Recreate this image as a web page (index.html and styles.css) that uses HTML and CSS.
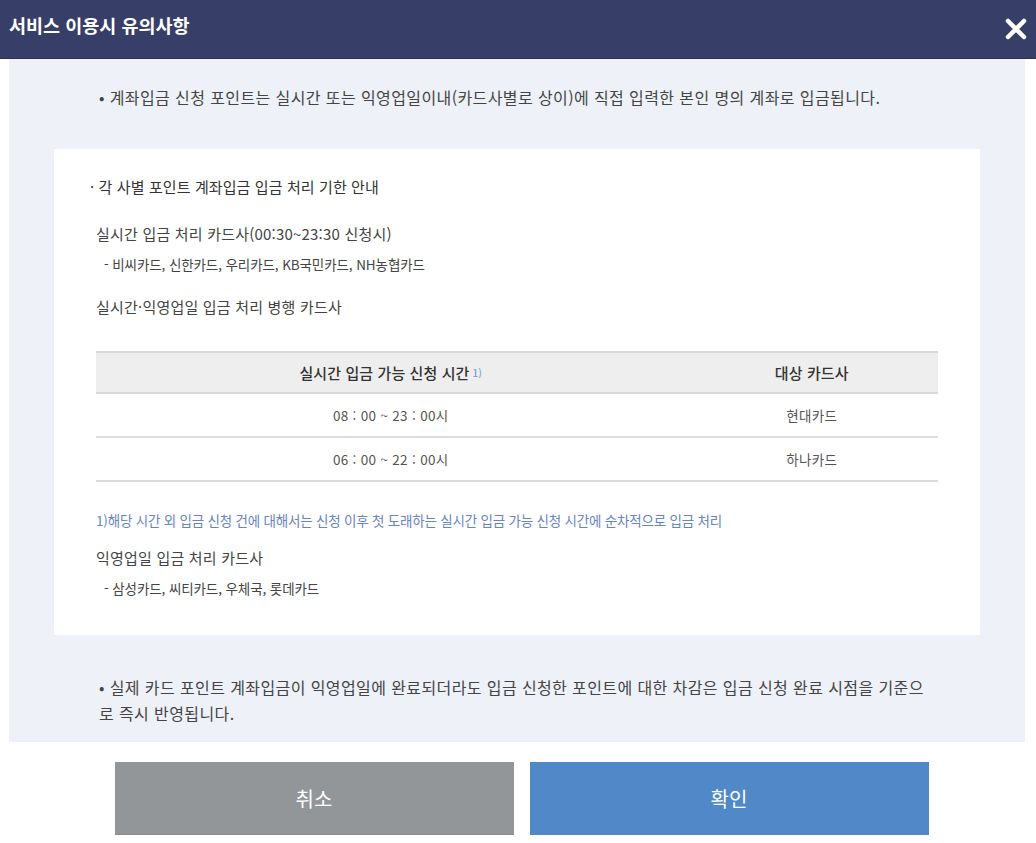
FILE: index.html
```html
<!DOCTYPE html>
<html lang="ko">
<head>
  <meta charset="UTF-8">
  <meta name="viewport" content="width=device-width, initial-scale=1.0">
  <title>서비스 이용시 유의사항</title>
  <link rel="stylesheet" href="styles.css">
</head>
<body>
  <div class="popup">
    <div class="popup-head">
      <h2>서비스 이용시 유의사항</h2>
      <button class="btn-close" aria-label="닫기">
        <svg width="22" height="22" viewBox="0 0 22 22">
          <path d="M3 3 L19 19 M19 3 L3 19" stroke="#fff" stroke-width="4.5" stroke-linecap="round"/>
        </svg>
      </button>
    </div>

    <div class="popup-body">
      <p class="notice">• 계좌입금 신청 포인트는 실시간 또는 익영업일이내(카드사별로 상이)에 직접 입력한 본인 명의 계좌로 입금됩니다.</p>

      <div class="info-box">
        <p class="info-title">· 각 사별 포인트 계좌입금 입금 처리 기한 안내</p>

        <p class="sub-title first">실시간 입금 처리 카드사(00:30~23:30 신청시)</p>
        <p class="card-list">- 비씨카드, 신한카드, 우리카드, KB국민카드, NH농협카드</p>

        <p class="sub-title">실시간·익영업일 입금 처리 병행 카드사</p>

        <table class="time-table">
          <thead>
            <tr>
              <th class="col-time">실시간 입금 가능 신청 시간<sup>1)</sup></th>
              <th>대상 카드사</th>
            </tr>
          </thead>
          <tbody>
            <tr>
              <td>08 : 00 ~ 23 : 00시</td>
              <td>현대카드</td>
            </tr>
            <tr>
              <td>06 : 00 ~ 22 : 00시</td>
              <td>하나카드</td>
            </tr>
          </tbody>
        </table>

        <p class="footnote">1)해당 시간 외 입금 신청 건에 대해서는 신청 이후 첫 도래하는 실시간 입금 가능 신청 시간에 순차적으로 입금 처리</p>

        <p class="sub-title after-note">익영업일 입금 처리 카드사</p>
        <p class="card-list">- 삼성카드, 씨티카드, 우체국, 롯데카드</p>
      </div>

      <p class="notice notice-bottom">• 실제 카드 포인트 계좌입금이 익영업일에 완료되더라도 입금 신청한 포인트에 대한 차감은 입금 신청 완료 시점을 기준으로 즉시 반영됩니다.</p>
    </div>

    <div class="popup-foot">
      <button class="btn btn-cancel">취소</button>
      <button class="btn btn-ok">확인</button>
    </div>
  </div>
</body>
</html>
```

FILE: styles.css
```css
* {
  margin: 0;
  padding: 0;
  box-sizing: border-box;
}

body {
  font-family: 'Noto Sans CJK KR', 'Noto Sans', sans-serif;
  background: #fff;
  color: #333;
  width: 1036px;
  height: 843px;
  overflow: hidden;
}

.popup-head {
  height: 59px;
  background: #373f68;
  border-bottom: 1px solid #2c3358;
  display: flex;
  align-items: center;
  justify-content: space-between;
  padding: 0 9px 8px 9px;
}

.popup-head h2 {
  color: #fff;
  font-size: 18.5px;
  font-weight: 700;
  letter-spacing: 0;
}

.btn-close {
  background: none;
  border: 0;
  cursor: pointer;
  display: flex;
  margin-top: 8px;
}

.popup-body {
  margin: 0 11px 0 9px;
  background: #eef1f8;
  padding: 25px 45px 16px 45px;
}

.notice {
  font-size: 16px;
  color: #444;
  letter-spacing: 0.4px;
  line-height: 26px;
  padding: 0 36px 0 45px;
}

.notice-bottom {
  margin-top: 39px;
  padding-right: 50px;
  word-break: break-all;
}

.info-box {
  background: #fff;
  margin-top: 39px;
  padding: 27px 42px 37px 42px;
}

.info-title {
  font-size: 15px;
  line-height: 22px;
  color: #333;
  letter-spacing: 0.1px;
  margin-left: -6px;
}

.sub-title {
  font-size: 15px;
  line-height: 22px;
  color: #444;
  letter-spacing: 0.2px;
  margin-top: 22px;
}

.sub-title.first {
  margin-top: 25px;
}

.sub-title.after-note {
  margin-top: 17px;
}

.card-list {
  font-size: 13.5px;
  line-height: 20px;
  color: #444;
  letter-spacing: -0.1px;
  margin-top: 9px;
  padding-left: 8px;
}

.time-table {
  width: 100%;
  border-collapse: collapse;
  margin-top: 33px;
  border-top: 2px solid #d8d8d8;
}

.time-table th {
  background: #eeeeee;
  height: 41px;
  font-size: 15px;
  font-weight: 500;
  color: #333;
  letter-spacing: 0.1px;
  border-bottom: 2px solid #d8d8d8;
}

.time-table th.col-time {
  width: 70%;
}

.time-table sup {
  font-size: 10px;
  color: #7f9fd6;
  margin-left: 3px;
  vertical-align: 2px;
}

.time-table td {
  height: 44px;
  text-align: center;
  font-size: 13.5px;
  color: #555;
  letter-spacing: 0.3px;
  border-bottom: 2px solid #dcdcdc;
}

.footnote {
  font-size: 13.5px;
  line-height: 20px;
  color: #6684c6;
  letter-spacing: -0.2px;
  margin-top: 28px;
}

.popup-foot {
  display: flex;
  justify-content: center;
  gap: 16px;
  margin-top: 20px;
  padding-left: 7px;
}

.btn {
  width: 399px;
  height: 73px;
  border: 0;
  color: #fff;
  font-family: inherit;
  font-size: 20px;
  cursor: pointer;
}

.btn-cancel {
  background: #939699;
  border-bottom: 1px solid #8a8d90;
}

.btn-ok {
  background: #5188c8;
}
```
